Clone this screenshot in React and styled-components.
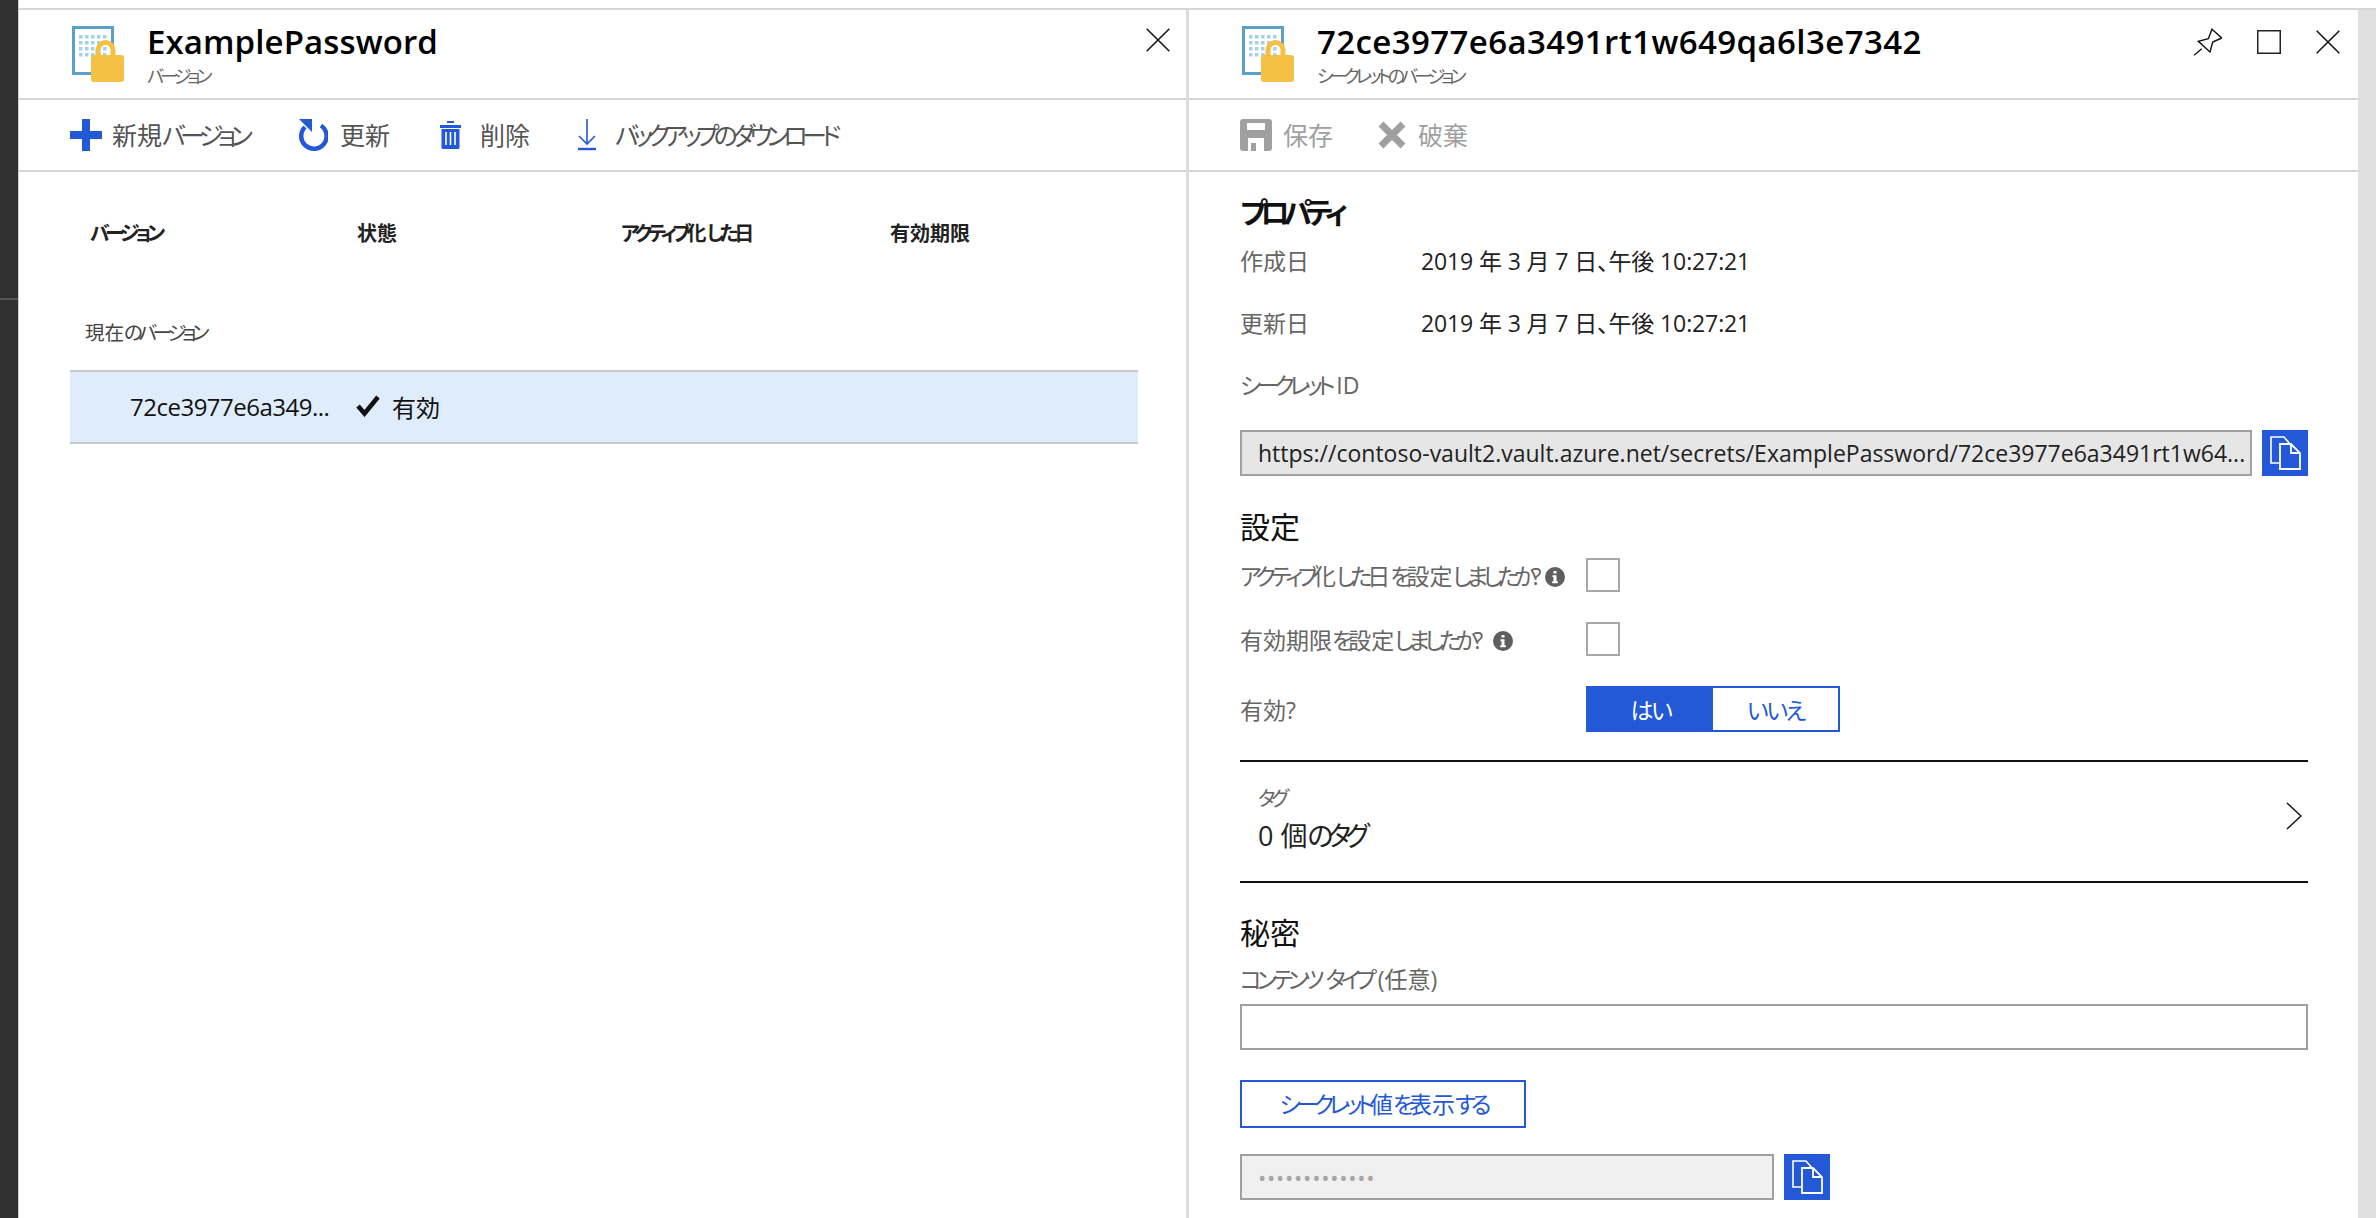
import React from "react";
import styled, { createGlobalStyle } from "styled-components";

const FONT = `"Open Sans", "Noto Sans CJK JP", sans-serif`;
const BLUE = "#2359d6";

const Global = createGlobalStyle`
  html, body { margin: 0; padding: 0; background: #fff; }
  body { font-family: ${FONT}; font-feature-settings: "palt"; }
  * { box-sizing: border-box; }
`;

const Kana = styled.span`
  letter-spacing: -0.22em;
`;
const Jp = ({ children }) => (
  <>
    {String(children)
      .split(/([\u3040-\u30ff]+)/)
      .map((part, i) => (i % 2 ? <Kana key={i}>{part}</Kana> : part))}
  </>
);

const Page = styled.div`
  display: flex;
  width: 2376px;
  height: 1218px;
  overflow: hidden;
`;
const DarkStrip = styled.div`
  width: 19px;
  flex: none;
  background: linear-gradient(#303030 298px, #555 298px, #555 300px, #303030 300px);
  border-right: 1px solid #cfcfcf;
`;
const Workspace = styled.div`
  flex: 1;
  display: flex;
  flex-direction: column;
  padding-top: 8px;
`;
const Blades = styled.div`
  flex: 1;
  display: flex;
  border-top: 2px solid #d5d5d5;
`;
const Blade = styled.section`
  flex: none;
  width: ${(p) => p.$width}px;
  background: #fff;
  ${(p) => p.$divided && "border-left: 3px solid #dcdcdc;"}
`;
const Gutter = styled.div`
  flex: 1;
  background: #e0e0e0;
`;
const Header = styled.header`
  height: 90px;
  display: flex;
  align-items: flex-start;
  border-bottom: 2px solid #d5d5d5;
  padding-top: 16px;
  padding-left: ${(p) => p.$inset}px;
`;
const TitleBlock = styled.div`
  margin-left: 23px;
  display: flex;
  flex-direction: column;
`;
const Title = styled.h1`
  margin: -2px 0 0;
  font-size: 33px;
  line-height: 36px;
  height: 36px;
  font-weight: 600;
  color: #000;
  letter-spacing: ${(p) => p.$spacing}px;
  white-space: nowrap;
`;
const Subtitle = styled.div`
  margin-top: 5px;
  font-size: 18px;
  line-height: 22px;
  color: #666;
`;
const HeaderActions = styled.div`
  margin-left: auto;
  display: flex;
  align-items: center;
  gap: ${(p) => p.$gap || 0}px;
  padding-right: ${(p) => p.$end}px;
  padding-top: 2px;
`;
const Toolbar = styled.div`
  height: 72px;
  display: flex;
  align-items: center;
  border-bottom: 2px solid #d5d5d5;
  padding-bottom: 1px;
  padding-left: ${(p) => p.$inset}px;
`;
const Tool = styled.div`
  display: flex;
  align-items: center;
  gap: ${(p) => p.$gap}px;
  width: ${(p) => p.$width}px;
  font-size: 25px;
  line-height: 32px;
  color: ${(p) => (p.$off ? "#a0a0a0" : "#555")};
  white-space: nowrap;
`;
const TableHead = styled.div`
  display: grid;
  grid-template-columns: 267px 264px 269px auto;
  height: 40px;
  margin-top: 40px;
  padding-left: 71px;
  align-items: center;
  font-size: 20px;
  font-weight: 700;
  color: #222;
`;
const GroupLabel = styled.div`
  margin: 61px 0 17px 66px;
  height: 40px;
  line-height: 40px;
  font-size: 19.5px;
  color: #444;
`;
const VersionRow = styled.div`
  margin-left: 51px;
  width: 1068px;
  height: 74px;
  display: flex;
  align-items: center;
  padding-bottom: 2px;
  background: #dfecfc;
  border-top: 2px solid #c8c8c8;
  border-bottom: 2px solid #c8c8c8;
  font-size: 24px;
  color: #111;
`;
const VersionId = styled.div`
  width: 286px;
  padding-left: 60px;
  letter-spacing: -0.5px;
  white-space: nowrap;
`;
const StatusText = styled.div`
  margin-left: 12px;
`;
const Form = styled.div`
  width: 1068px;
  margin-left: 51px;
`;
const Heading = styled.h2`
  margin: ${(p) => p.$top}px 0 0;
  height: ${(p) => p.$height || 44}px;
  line-height: ${(p) => p.$height || 44}px;
  font-size: ${(p) => p.$size || 30}px;
  font-weight: ${(p) => p.$weight || 400};
  color: #111;
`;
const PropRow = styled.div`
  display: flex;
  align-items: center;
  height: 40px;
  padding-bottom: 3px;
  margin-top: ${(p) => p.$top}px;
  font-size: 23px;
  color: #666;
`;
const PropName = styled.div`
  width: 181px;
`;
const PropValue = styled.div`
  color: #222;
  font-size: 23px;
  letter-spacing: -0.12px;
  white-space: nowrap;
`;
const FieldLabel = styled.div`
  height: ${(p) => p.$height || 40}px;
  line-height: ${(p) => p.$height - 6 || 40}px;
  margin-top: ${(p) => p.$top}px;
  font-size: 23px;
  color: #666;
  white-space: nowrap;
`;
const FieldRow = styled.div`
  display: flex;
  gap: 10px;
  margin-top: ${(p) => p.$top}px;
`;
const TextBox = styled.div`
  width: ${(p) => p.$width}px;
  height: 46px;
  flex: none;
  display: flex;
  align-items: center;
  padding: 0 16px;
  border: 2px solid #a0a0a0;
  background: ${(p) => p.$bg || "#fff"};
  font-size: 23px;
  color: #222;
  white-space: nowrap;
  overflow: hidden;
`;
const MaskedValue = styled.span`
  color: #a6a6a6;
  font-size: 22px;
  letter-spacing: 0.75px;
`;
const CopyButton = styled.button`
  width: 46px;
  height: 46px;
  flex: none;
  padding: 0;
  border: 0;
  background: ${BLUE};
  display: flex;
`;
const OptionRow = styled.div`
  display: flex;
  align-items: center;
  margin-top: ${(p) => p.$top}px;
`;
const OptionLabel = styled.div`
  width: 346px;
  display: flex;
  align-items: center;
  gap: ${(p) => p.$gap || 4}px;
  font-size: 23px;
  color: #666;
  white-space: nowrap;
`;
const CheckBox = styled.div`
  width: 34px;
  height: 34px;
  border: 2px solid #a8a8a8;
  background: #fff;
`;
const Toggle = styled.div`
  display: flex;
  width: 254px;
  height: 46px;
  border: 2px solid ${BLUE};
`;
const ToggleOption = styled.div`
  width: ${(p) => p.$width}px;
  display: flex;
  align-items: center;
  justify-content: center;
  font-size: 23px;
  letter-spacing: -2.4px;
  background: ${(p) => (p.$on ? BLUE : "#fff")};
  color: ${(p) => (p.$on ? "#fff" : BLUE)};
`;
const TagSection = styled.div`
  margin-top: 28px;
  height: 123px;
  display: flex;
  align-items: center;
  justify-content: space-between;
  padding: 0 6px 0 18px;
  border-top: 2px solid #111;
  border-bottom: 2px solid #111;
`;
const TagText = styled.div`
  margin-bottom: 4px;
`;
const TagCaption = styled.div`
  font-size: 20px;
  line-height: 28px;
  color: #666;
`;
const TagValue = styled.div`
  margin-top: 5px;
  font-size: 27px;
  line-height: 36px;
  color: #222;
`;
const ChevronBox = styled.div`
  display: flex;
  margin-bottom: 12px;
`;
const RevealButton = styled.button`
  display: block;
  margin-top: 30px;
  width: 286px;
  height: 48px;
  border: 2px solid ${BLUE};
  background: #fff;
  color: ${BLUE};
  font-family: inherit;
  font-feature-settings: inherit;
  font-size: 23px;
  padding: 0 0 2px;
`;

const VaultIcon = () => (
  <svg width="52" height="56" viewBox="0 0 52 56" style={{ flex: "none" }}>
    <rect x="1.5" y="1.5" width="39" height="46" fill="#fff" stroke="#5c9fc9" strokeWidth="3" />
    {[8, 14, 20, 26].map((y) =>
      [7, 13, 19, 25, 31].map((x) => (
        <rect key={`${x}-${y}`} x={x} y={y + 1} width="3.5" height="3.5" fill="#a5d0ea" />
      ))
    )}
    <path d="M26 30v-6a7.5 7.5 0 0 1 15 0v6" fill="none" stroke="#f4c145" strokeWidth="5" />
    <rect x="19" y="29" width="33" height="27" rx="3" fill="#f4c145" />
  </svg>
);
const Plus = () => (
  <svg width="32" height="32" viewBox="0 0 32 32" style={{ flex: "none" }}>
    <path d="M12 0h8v12h12v8H20v12h-8V20H0v-8h12z" fill={BLUE} />
  </svg>
);
const Refresh = () => (
  <svg width="30" height="32" viewBox="0 0 30 32" style={{ flex: "none" }}>
    <path d="M7 8A12.7 12.7 0 1 0 23 6.5" fill="none" stroke={BLUE} strokeWidth="4.5" />
    <path d="M1 0h13v13z" fill={BLUE} />
  </svg>
);
const Trash = () => (
  <svg width="21" height="28" viewBox="0 0 21 28" style={{ flex: "none" }}>
    <path d="M7 0h7v2H7zM0 4h21v3H0z" fill={BLUE} />
    <path d="M1.5 8h18v18.5a1.5 1.5 0 0 1-1.5 1.5H3a1.5 1.5 0 0 1-1.5-1.5z" fill={BLUE} />
    <path d="M6 11v13M10.5 11v13M15 11v13" stroke="#fff" strokeWidth="1.6" />
  </svg>
);
const Download = () => (
  <svg width="18" height="32" viewBox="0 0 18 32" style={{ flex: "none" }}>
    <path d="M9 0v25M1 17l8 8 8-8" fill="none" stroke={BLUE} strokeWidth="1.6" />
    <path d="M0 30h18" stroke={BLUE} strokeWidth="2.4" />
  </svg>
);
const Save = () => (
  <svg width="32" height="32" viewBox="0 0 32 32" style={{ flex: "none" }}>
    <path
      d="M3 0h26a3 3 0 0 1 3 3v26a3 3 0 0 1-3 3h-5V19H8v13H3a3 3 0 0 1-3-3V3a3 3 0 0 1 3-3zm4 4v7h18V4zm4 20v8h5v-8z"
      fill="#a0a0a0"
      fillRule="evenodd"
    />
  </svg>
);
const Discard = () => (
  <svg width="28" height="28" viewBox="0 0 28 28" style={{ flex: "none" }}>
    <path d="M3 3l22 22M25 3L3 25" stroke="#a0a0a0" strokeWidth="7" />
  </svg>
);
const CloseGlyph = () => (
  <svg width="24" height="24" viewBox="0 0 24 24" style={{ display: "block" }}>
    <path d="M.7.7l22.6 22.6M23.3.7L.7 23.3" stroke="#111" strokeWidth="1.5" fill="none" />
  </svg>
);
const Pin = () => (
  <svg width="28" height="28" viewBox="0 0 28 28" style={{ display: "block" }}>
    <path
      d="M18 1.3L27.7 10L18.7 14L16 24L4.3 13.3L14.3 10.7zM7.7 20.7L0 27.3"
      fill="none"
      stroke="#111"
      strokeWidth="1.4"
    />
  </svg>
);
const MaxGlyph = () => (
  <svg width="24" height="24" viewBox="0 0 24 24" style={{ display: "block" }}>
    <rect x=".75" y=".75" width="22.5" height="22.5" fill="none" stroke="#222" strokeWidth="1.5" />
  </svg>
);
const Check = () => (
  <svg width="24" height="22" viewBox="0 0 24 22" style={{ flex: "none" }}>
    <path d="M2 11l6.5 7.5L22 2" fill="none" stroke="#111" strokeWidth="4.6" />
  </svg>
);
const CopyGlyph = () => (
  <svg width="46" height="46" viewBox="0 0 46 46">
    <path d="M18 33H9V7h13l6 7" fill="none" stroke="#fff" strokeWidth="1.6" />
    <path d="M18 14h11l9 9v16H18zM29 14v9h9" fill="none" stroke="#fff" strokeWidth="1.8" />
  </svg>
);
const Info = () => (
  <svg width="20" height="20" viewBox="0 0 20 20" style={{ flex: "none", marginTop: 4 }}>
    <circle cx="10" cy="10" r="10" fill="#5f5f5f" />
    <path d="M8.5 4h3v2.6h-3zM7.5 8.3h4v6h1.3v2H7.2v-2h1.3v-4H7.5z" fill="#fff" />
  </svg>
);
const Chevron = () => (
  <svg width="16" height="28" viewBox="0 0 16 28">
    <path d="M1 1l14 13L1 27" fill="none" stroke="#111" strokeWidth="1.5" />
  </svg>
);

const DATE = "2019 年 3 月 7 日、午後 10:27:21";

export default function App() {
  return (
    <Page>
      <Global />
      <DarkStrip />
      <Workspace>
        <Blades>
          <Blade $width={1167}>
            <Header $inset={53}>
              <VaultIcon />
              <TitleBlock>
                <Title $spacing={0.1}>ExamplePassword</Title>
                <Subtitle><Jp>バージョン</Jp></Subtitle>
              </TitleBlock>
              <HeaderActions $end={16}>
                <CloseGlyph />
              </HeaderActions>
            </Header>
            <Toolbar $inset={51}>
              <Tool $gap={10} $width={228}><Plus /><span><Jp>新規バージョン</Jp></span></Tool>
              <Tool $gap={12} $width={142}><Refresh />更新</Tool>
              <Tool $gap={19} $width={138}><Trash />削除</Tool>
              <Tool $gap={19}><Download /><span><Jp>バックアップのダウンロード</Jp></span></Tool>
            </Toolbar>
            <TableHead>
              <div><Jp>バージョン</Jp></div>
              <div>状態</div>
              <div><Jp>アクティブ化した日</Jp></div>
              <div>有効期限</div>
            </TableHead>
            <GroupLabel><Jp>現在のバージョン</Jp></GroupLabel>
            <VersionRow>
              <VersionId>72ce3977e6a349...</VersionId>
              <Check />
              <StatusText>有効</StatusText>
            </VersionRow>
          </Blade>
          <Blade $width={1172} $divided>
            <Header $inset={53}>
              <VaultIcon />
              <TitleBlock>
                <Title $spacing={0.4}>72ce3977e6a3491rt1w649qa6l3e7342</Title>
                <Subtitle><Jp>シークレットのバージョン</Jp></Subtitle>
              </TitleBlock>
              <HeaderActions $gap={35} $end={18}>
                <Pin />
                <MaxGlyph />
                <CloseGlyph />
              </HeaderActions>
            </Header>
            <Toolbar $inset={51}>
              <Tool $off $gap={11} $width={138}><Save />保存</Tool>
              <Tool $off $gap={12}><Discard />破棄</Tool>
            </Toolbar>
            <Form>
              <Heading $top={21} $height={40} $size={29} $weight={700}><Jp>プロパティ</Jp></Heading>
              <PropRow $top={8}><PropName>作成日</PropName><PropValue>{DATE}</PropValue></PropRow>
              <PropRow $top={22}><PropName>更新日</PropName><PropValue>{DATE}</PropValue></PropRow>
              <FieldLabel $top={22}><Jp>シークレット ID</Jp></FieldLabel>
              <FieldRow $top={25}>
                <TextBox $width={1012} $bg="#e6e6e6">https://contoso-vault2.vault.azure.net/secrets/ExamplePassword/72ce3977e6a3491rt1w64...</TextBox>
                <CopyButton aria-label="コピー"><CopyGlyph /></CopyButton>
              </FieldRow>
              <Heading $top={29}>設定</Heading>
              <OptionRow $top={9}>
                <OptionLabel><span><Jp>アクティブ化した日を設定しましたか?</Jp></span><Info /></OptionLabel>
                <CheckBox />
              </OptionRow>
              <OptionRow $top={30}>
                <OptionLabel $gap={10}><span><Jp>有効期限を設定しましたか?</Jp></span><Info /></OptionLabel>
                <CheckBox />
              </OptionRow>
              <OptionRow $top={30}>
                <OptionLabel>有効?</OptionLabel>
                <Toggle>
                  <ToggleOption $on $width={125}>はい</ToggleOption>
                  <ToggleOption $width={125}>いいえ</ToggleOption>
                </Toggle>
              </OptionRow>
              <TagSection>
                <TagText>
                  <TagCaption><Jp>タグ</Jp></TagCaption>
                  <TagValue><Jp>0 個のタグ</Jp></TagValue>
                </TagText>
                <ChevronBox><Chevron /></ChevronBox>
              </TagSection>
              <Heading $top={28}>秘密</Heading>
              <FieldLabel $top={9} $height={36}><Jp>コンテンツ タイプ (任意)</Jp></FieldLabel>
              <FieldRow $top={4}><TextBox $width={1068} /></FieldRow>
              <RevealButton><Jp>シークレット値を表示する</Jp></RevealButton>
              <FieldRow $top={26}>
                <TextBox $width={534} $bg="#f0f0f0"><MaskedValue>•••••••••••••</MaskedValue></TextBox>
                <CopyButton aria-label="コピー"><CopyGlyph /></CopyButton>
              </FieldRow>
            </Form>
          </Blade>
          <Gutter />
        </Blades>
      </Workspace>
    </Page>
  );
}
